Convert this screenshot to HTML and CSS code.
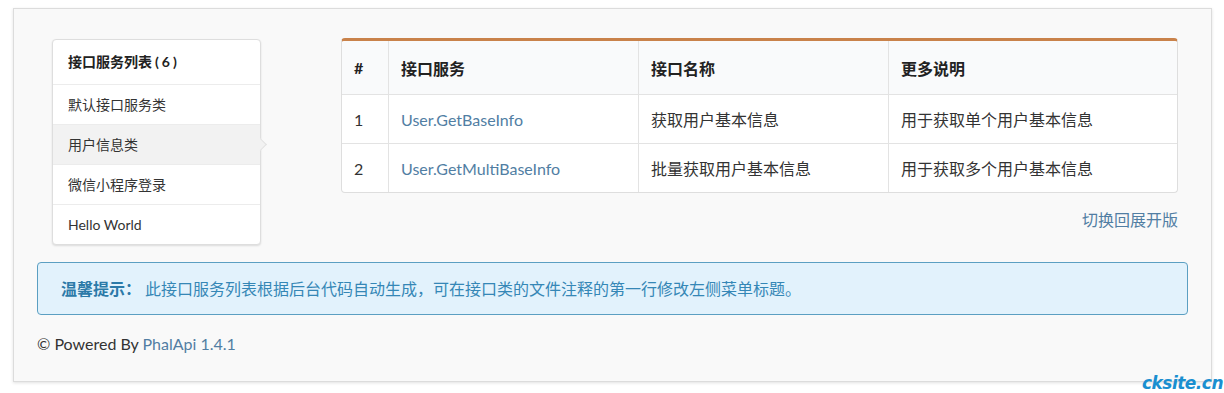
FILE: index.html
```html
<!DOCTYPE html>
<html lang="zh">
<head>
<meta charset="utf-8">
<title>PhalApi</title>
<link rel="stylesheet" href="styles.css">
</head>
<body>
<div class="page">
  <div class="main">
    <div class="menu">
      <div class="menu-header">接口服务列表<span class="count">(6)</span></div>
      <div class="menu-item">默认接口服务类</div>
      <div class="menu-item active">用户信息类</div>
      <div class="menu-item">微信小程序登录</div>
      <div class="menu-item">Hello World</div>
    </div>
    <div class="content">
      <table class="api-table">
        <thead>
          <tr><th class="c-num">#</th><th class="c-svc">接口服务</th><th class="c-name">接口名称</th><th>更多说明</th></tr>
        </thead>
        <tbody>
          <tr><td>1</td><td><a class="link">User.GetBaseInfo</a></td><td>获取用户基本信息</td><td>用于获取单个用户基本信息</td></tr>
          <tr><td>2</td><td><a class="link">User.GetMultiBaseInfo</a></td><td>批量获取用户基本信息</td><td>用于获取多个用户基本信息</td></tr>
        </tbody>
      </table>
      <div class="toggle"><a class="link">切换回展开版</a></div>
    </div>
  </div>
  <div class="message"><b>温馨提示：</b>此接口服务列表根据后台代码自动生成，可在接口类的文件注释的第一行修改左侧菜单标题。</div>
  <div class="footer">© Powered By <a class="link">PhalApi 1.4.1</a></div>
</div>
<div class="watermark">cksite.cn</div>
</body>
</html>
```
FILE: styles.css
```css
html, body {
  margin: 0;
  padding: 0;
  background: #ffffff;
}
body {
  font-family: Lato, "Noto Sans CJK SC", sans-serif;
  color: #333333;
  position: relative;
  height: 393px;
  overflow: hidden;
}
.page {
  margin: 8px 0 0 13px;
  height: 372px;
  background: #f9f9f9;
  border: 1px solid #dcdcdc;
  box-shadow: 0 1px 3px rgba(0,0,0,0.12);
  padding: 0 23px;
  box-sizing: content-box;
  width: 1151px;
}
.main {
  display: flex;
  align-items: flex-start;
  padding: 29px 10px 0 15px;
}
.menu {
  width: 207px;
  margin-top: 1px;
  background: #fff;
  border: 1px solid #dedede;
  border-radius: 4px;
  box-shadow: 0 1px 2px rgba(0,0,0,0.12);
  font-size: 14px;
}
.menu-header {
  height: 44px;
  line-height: 44px;
  padding-left: 15px;
  font-weight: bold;
  color: #222;
  border-bottom: 1px solid #ececec;
}
.count {
  margin-left: 3px;
  letter-spacing: 3px;
}
.menu-item {
  position: relative;
  height: 39px;
  line-height: 39px;
  padding-left: 15px;
  color: #333;
  border-bottom: 1px solid #ececec;
}
.menu-item:last-child {
  border-bottom: none;
}
.menu-item.active {
  background: #f2f2f2;
}
.menu-item.active::after {
  content: "";
  position: absolute;
  right: -5px;
  top: 15px;
  width: 8px;
  height: 8px;
  background: #f2f2f2;
  border-top: 1px solid #e2e2e2;
  border-right: 1px solid #e2e2e2;
  transform: rotate(45deg);
}
.content {
  flex: 1;
  margin-left: 80px;
}
.api-table {
  width: 100%;
  border-collapse: separate;
  border-spacing: 0;
  border: 1px solid #dedede;
  border-top: 3px solid #c9824a;
  border-radius: 4px;
  font-size: 16px;
  background: #fff;
}
.api-table th {
  text-align: left;
  font-weight: bold;
  color: #222;
  background: #f9fafb;
  height: 53px;
  padding: 0 12px;
  border-bottom: 1px solid #e3e3e3;
  border-left: 1px solid #e3e3e3;
}
.api-table td {
  height: 48px;
  padding: 0 12px;
  border-left: 1px solid #e3e3e3;
  border-top: 1px solid #e3e3e3;
  color: #333;
}
.api-table tbody tr:first-child td {
  border-top: none;
}
.api-table th:first-child,
.api-table td:first-child {
  border-left: none;
}
.api-table th:first-child {
  border-top-left-radius: 3px;
}
.api-table th:last-child {
  border-top-right-radius: 3px;
}
.c-num { width: 22px; }
.c-svc { width: 225px; }
.c-name { width: 225px; }
.link {
  color: #517ea3;
  text-decoration: none;
}
.toggle {
  text-align: right;
  font-size: 16px;
  margin-top: 16px;
  line-height: 22px;
}
.message {
  margin-top: 17px;
  height: 51px;
  line-height: 51px;
  padding-left: 23px;
  background: #e2f2fc;
  border: 1px solid #5b9fc2;
  border-radius: 4px;
  color: #3587b6;
  font-size: 16px;
}
.message b {
  color: #2c7aa8;
  margin-right: 4px;
}
.footer {
  margin-top: 18px;
  font-size: 16px;
  color: #333;
  line-height: 22px;
}
.watermark {
  position: absolute;
  right: 1px;
  bottom: 0;
  font-family: "DejaVu Sans", sans-serif;
  font-weight: bold;
  font-style: italic;
  font-size: 17px;
  line-height: 20px;
  color: #1a8fd0;
  letter-spacing: -0.5px;
}
```
